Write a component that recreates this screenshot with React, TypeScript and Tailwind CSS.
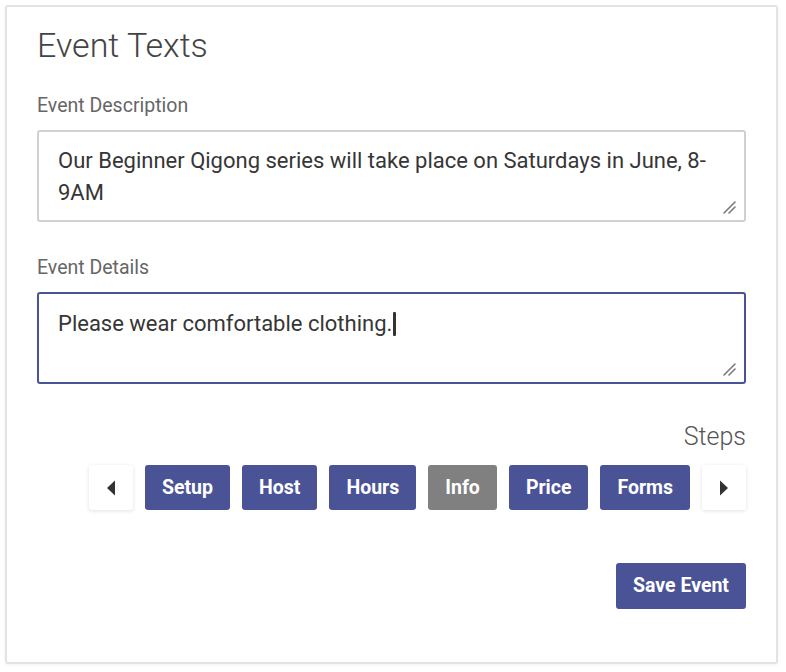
import React from 'react';

const steps = [
  { label: 'Setup', active: false },
  { label: 'Host', active: false },
  { label: 'Hours', active: false },
  { label: 'Info', active: true },
  { label: 'Price', active: false },
  { label: 'Forms', active: false },
];

function Grip() {
  return (
    <svg className="absolute right-[8px] bottom-[6px]" width="14" height="14" viewBox="0 0 14 14">
      <line x1="2" y1="13" x2="13" y2="2" stroke="#7a7a7a" strokeWidth="1.6" strokeLinecap="round" />
      <line x1="7" y1="13" x2="13" y2="7" stroke="#7a7a7a" strokeWidth="1.6" strokeLinecap="round" />
    </svg>
  );
}

function TextBox({ children, focused }: { children: React.ReactNode; focused?: boolean }) {
  return (
    <div
      className={
        'relative h-[92px] rounded-[3px] border-2 px-[19px] pt-[13px] text-[22px] leading-[32px] text-[#363636] ' +
        (focused ? 'border-[#4a5298]' : 'border-[#cfd0d4]')
      }
    >
      {children}
      <Grip />
    </div>
  );
}

function Arrow({ dir }: { dir: 'left' | 'right' }) {
  return (
    <button className="flex h-[45px] w-[44px] items-center justify-center rounded-[3px] bg-white shadow-[0_1px_4px_rgba(0,0,0,0.12)]">
      <svg width="10" height="16" viewBox="0 0 10 16">
        {dir === 'left' ? <path d="M9 0.5 L1 8 L9 15.5 Z" fill="#333" /> : <path d="M1 0.5 L9 8 L1 15.5 Z" fill="#333" />}
      </svg>
    </button>
  );
}

export default function App() {
  return (
    <div className="h-[672px] w-[786px] bg-white pl-[5px] pt-[5px]" style={{ fontFamily: 'Roboto, "Liberation Sans", sans-serif' }}>
      <div className="flex h-[659px] w-[773px] flex-col rounded-[3px] border-2 border-[#e1e3e7] bg-white px-[30px] pt-[16px] shadow-[0_1px_3px_rgba(0,0,0,0.06)]">
        <h1 className="mt-[2px] text-[34px] font-light leading-[40px] text-[#444]">Event Texts</h1>

        <div className="mt-[29px] text-[19.5px] leading-[24px] text-[#666]">Event Description</div>
        <div className="mt-[12px]">
          <TextBox>Our Beginner Qigong series will take place on Saturdays in June, 8-9AM</TextBox>
        </div>

        <div className="mt-[34px] text-[19.5px] leading-[24px] text-[#666]">Event Details</div>
        <div className="mt-[12px]">
          <TextBox focused>
            Please wear comfortable clothing.
            <span className="ml-[1px] inline-block h-[24px] w-[3px] translate-y-[5px] rounded-[1px] bg-[#333]" />
          </TextBox>
        </div>

        <div className="mt-[38px] text-right text-[25px] font-light leading-[30px] text-[#555]">Steps</div>

        <div className="mt-[13px] flex justify-end gap-[12px]">
          <Arrow dir="left" />
          {steps.map(s => (
            <button
              key={s.label}
              className={
                'h-[45px] rounded-[3px] px-[17px] text-[19.5px] font-bold text-white ' +
                (s.active ? 'bg-[#808080]' : 'bg-[#4b5397]')
              }
            >
              {s.label}
            </button>
          ))}
          <Arrow dir="right" />
        </div>

        <div className="mt-[53px] flex justify-end">
          <button className="h-[46px] w-[130px] rounded-[3px] bg-[#4b5397] text-[19.5px] font-bold text-white">
            Save Event
          </button>
        </div>
      </div>
    </div>
  );
}
